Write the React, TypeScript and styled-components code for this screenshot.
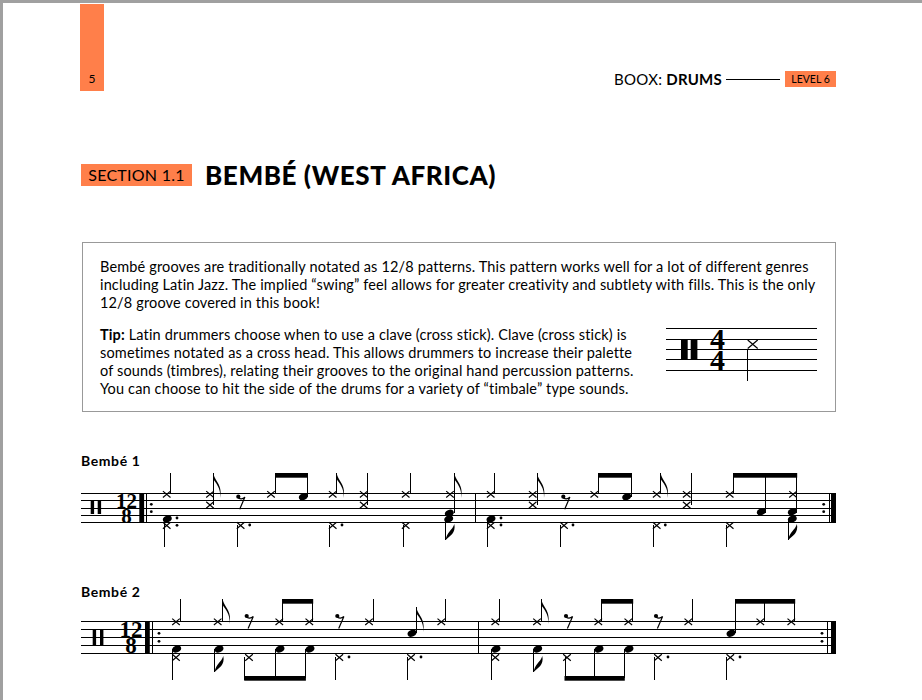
import React from 'react';
import styled, {createGlobalStyle} from 'styled-components';

const ORANGE = '#ff7f4a';

const GlobalStyle = createGlobalStyle`
  html, body {
    margin: 0;
    background: #fff;
  }
  body {
    font-family: Lato, "Open Sans", sans-serif;
    color: #000;
  }
`;

type Pt = [number, number];
type Stem = [number, number, number];
type Beam = [number, number, number];

interface ScoreData {
  top: number;
  height: number;
  staff: number[];
  clef: [number, number, number, number];
  meter: {x: number; size: number; upper: number; lower: number};
  repeatStart: [number, number];
  bar: number;
  repeatEnd: [number, number];
  crosses: Pt[];
  heads: Pt[];
  stems: Stem[];
  beams: Beam[];
  flagsUp: Pt[];
  flagsDown: Pt[];
  rests: Pt[];
  dots: Pt[];
}

const atY = (y: number, xs: number[]): Pt[] => xs.map((x): Pt => [x, y]);
const stemsFrom = (y1: number, y2: number, xs: number[]): Stem[] =>
  xs.map((x): Stem => [x, y1, y2]);
// keeps hairlines on a whole pixel so they stay black
const crisp = (v: number) => Math.floor(v) + 0.5;

const bembe1: ScoreData = {
  top: 468,
  height: 84,
  staff: [493.5, 500.5, 508.5, 515.5, 522.5],
  clef: [90.7, 97.7, 501, 13],
  meter: {x: 126.5, size: 21, upper: 508, lower: 523},
  repeatStart: [139.3, 146.3],
  bar: 475.3,
  repeatEnd: [829, 831],
  crosses: [
    ...atY(494.3, [166.7, 210, 271, 332.7, 363.7, 405.7, 450, 490.7, 532.7, 594.3, 656.7, 686.7, 729.7, 793]),
    ...atY(505, [210, 363.7, 532.7, 686.7]),
    ...atY(525.5, [166.7, 240.6, 332.7, 405.7, 490.7, 564, 656.7, 729.7]),
  ],
  heads: [
    [167.3, 519], [303.3, 496.7], [449.3, 513.3], [448.7, 519], [491, 519],
    [626.7, 496.7], [761.3, 511.7], [792.3, 511.7], [792.3, 519],
  ],
  stems: [
    ...stemsFrom(473, 494, [170.3, 275.3, 336.7, 410.3, 494.3, 598.3, 660.7, 733.3]),
    ...stemsFrom(473, 505, [213.3, 367.7, 537, 691.3]),
    ...stemsFrom(473, 497, [307.3, 631]),
    ...stemsFrom(473, 513, [454.3, 765.3, 796.7]),
    ...stemsFrom(519, 547, [164.3, 487.3]),
    ...stemsFrom(525, 547, [237.3, 329.3, 403.3, 560.3, 653.3, 726.3]),
    ...stemsFrom(519, 540, [445.7, 788.3]),
  ],
  beams: [[275, 307.8, 473], [598, 631.5, 473], [733, 797.2, 473]],
  flagsUp: atY(473, [213.3, 336.7, 454.3, 537, 660.7]),
  flagsDown: atY(540, [445.7, 788.3]),
  rests: atY(496.7, [238.3, 563.3]),
  dots: [
    [177, 518], [177, 525.3], [249.7, 525], [342, 525], [501, 518], [501, 525],
    [573, 525], [665.3, 525], [151.3, 504.3], [151.3, 511.7], [823.7, 504.3], [823.7, 511.7],
  ],
};

const bembe2: ScoreData = {
  top: 599,
  height: 89,
  staff: [621.5, 629.5, 637.5, 645.5, 653.5],
  clef: [92.7, 100, 630, 15],
  meter: {x: 131, size: 23, upper: 637, lower: 653},
  repeatStart: [145, 152.7],
  bar: 478.7,
  repeatEnd: [827.7, 831],
  crosses: [
    ...atY(621.8, [176, 217.7, 279.3, 309.3, 369, 441.3, 495.3, 537, 598.3, 628.3, 688.3, 760.3, 791.3]),
    ...atY(657.5, [176, 249, 339.3, 411, 495.3, 567, 658, 730.3]),
  ],
  heads: [
    [176.7, 649], [219, 649], [280, 649], [310, 649], [412, 633.3], [496, 649],
    [537.7, 649], [599, 649], [629, 649], [731, 633.3],
  ],
  stems: [
    ...stemsFrom(599, 621, [180.3, 222.7, 282.7, 312.7, 373.3, 445.7, 499.3, 541.3, 601.3, 632.7, 692.3, 764.3, 794.7]),
    ...stemsFrom(607, 633, [416.3]),
    ...stemsFrom(599, 633, [735.3]),
    ...stemsFrom(649, 680, [172.3, 491.3]),
    ...stemsFrom(649, 672, [214.7, 533.7]),
    ...stemsFrom(649, 678, [275.3, 305.4, 594.3, 624.3]),
    ...stemsFrom(657, 680, [244.7, 335.3, 407.3, 565, 654.3, 726.3]),
  ],
  beams: [
    [282.4, 313.2, 599], [601, 633.2, 599], [735, 795.2, 599],
    [244.2, 305.9, 676], [564.5, 624.8, 676],
  ],
  flagsUp: [[222.7, 599], [416.3, 607], [541.3, 599]],
  flagsDown: atY(672, [214.7, 533.7]),
  rests: atY(616, [246.7, 337.3, 566, 656]),
  dots: [
    [349, 657], [421, 657], [668, 657], [740, 657], [159, 633.3], [159, 641.3],
    [822, 633.3], [822, 641.3],
  ],
};

function Cross({x, y, r = 3.8}: {x: number; y: number; r?: number}) {
  return (
    <path
      d={`M${x - r} ${y - r * 0.85}L${x + r} ${y + r * 0.85}M${x + r} ${y - r * 0.85}L${x - r} ${y + r * 0.85}`}
      stroke="#000"
      strokeWidth="1.15"
      fill="none"
    />
  );
}

function Rest({x, y}: {x: number; y: number}) {
  return (
    <g>
      <circle cx={x} cy={y} r="2.1" />
      <path
        d={`M${x} ${y + 1.2}C${x + 2.5} ${y + 2.6} ${x + 5} ${y + 2} ${x + 6.6} ${y + 0.4}L${x + 1.4} ${y + 12.6}`}
        stroke="#000"
        strokeWidth="1.2"
        fill="none"
      />
    </g>
  );
}

function Score({data}: {data: ScoreData}) {
  const first = data.staff[0];
  const last = data.staff[4];
  const span = last - first;
  const [clefA, clefB, clefY, clefH] = data.clef;
  return (
    <ScoreSvg
      width="755"
      height={data.height}
      viewBox={`81 ${data.top} 755 ${data.height}`}
    >
      {data.staff.map(y => (
        <line key={y} x1="81" x2="836" y1={y} y2={y} stroke="#000" strokeWidth="1.1" />
      ))}
      <rect x={clefA} y={clefY} width="3.4" height={clefH} />
      <rect x={clefB} y={clefY} width="3.4" height={clefH} />
      <MeterText $size={data.meter.size}>
        <tspan x={data.meter.x} y={data.meter.upper}>12</tspan>
        <tspan x={data.meter.x} y={data.meter.lower}>8</tspan>
      </MeterText>
      <rect x={data.repeatStart[0]} y={first - 0.5} width="4.8" height={span + 1} />
      <line x1={crisp(data.repeatStart[1])} x2={crisp(data.repeatStart[1])} y1={first} y2={last} stroke="#000" />
      <line x1={crisp(data.bar)} x2={crisp(data.bar)} y1={first} y2={last} stroke="#000" />
      <line x1={crisp(data.repeatEnd[0])} x2={crisp(data.repeatEnd[0])} y1={first} y2={last} stroke="#000" />
      <rect x={data.repeatEnd[1]} y={first - 0.5} width="5" height={span + 1} />
      {data.stems.map(([x, y1, y2], i) => (
        <line key={i} x1={crisp(x)} x2={crisp(x)} y1={y1} y2={y2} stroke="#000" strokeWidth="1" />
      ))}
      {data.beams.map(([x1, x2, y], i) => (
        <rect key={i} x={x1} y={y} width={x2 - x1} height="4.7" />
      ))}
      {data.flagsUp.map(([x, y], i) => (
        <path
          key={i}
          d={`M${x} ${y}C${x + 1} ${y + 8} ${x + 9.5} ${y + 11} ${x + 7} ${y + 25}C${x + 7.6} ${y + 14} ${x + 2} ${y + 10} ${x} ${y + 6}Z`}
        />
      ))}
      {data.flagsDown.map(([x, y], i) => (
        <path
          key={i}
          d={`M${x} ${y}C${x + 1} ${y - 8} ${x + 7} ${y - 10} ${x + 8.6} ${y - 16}C${x + 10.5} ${y - 7} ${x + 4} ${y - 4} ${x} ${y}Z`}
        />
      ))}
      {data.crosses.map(([x, y], i) => (
        <Cross key={i} x={x} y={y} />
      ))}
      {data.heads.map(([x, y], i) => (
        <ellipse key={i} cx={x} cy={y} rx="4.6" ry="3.3" transform={`rotate(-25 ${x} ${y})`} />
      ))}
      {data.rests.map(([x, y], i) => (
        <Rest key={i} x={x} y={y} />
      ))}
      {data.dots.map(([x, y], i) => (
        <circle key={i} cx={x} cy={y} r="1.4" />
      ))}
    </ScoreSvg>
  );
}

function CrossStickKey() {
  const lines = [11.5, 22.5, 32.5, 42.5, 53.5];
  return (
    <KeySvg width="156" height="70" viewBox="0 0 156 70">
      {lines.map(y => (
        <line key={y} x1="3" x2="154" y1={y} y2={y} stroke="#000" strokeWidth="1.1" />
      ))}
      <rect x="18" y="22" width="6.7" height="20" />
      <rect x="27.7" y="22" width="6.7" height="20" />
      <MeterText $size={30}>
        <tspan x="54.5" y="32">4</tspan>
        <tspan x="54.5" y="53">4</tspan>
      </MeterText>
      <Cross x={89.7} y={27.3} r={5} />
      <line x1="84.5" x2="84.5" y1="32" y2="64" stroke="#000" />
    </KeySvg>
  );
}

export default function App(): JSX.Element {
  return (
    <>
      <GlobalStyle />
      <Frame>
        <Header>
          <PageTab>5</PageTab>
          <RunningHead>
            <BookName>
              BOOX: <strong>DRUMS</strong>
            </BookName>
            <HeadRule />
            <LevelTag>LEVEL 6</LevelTag>
          </RunningHead>
        </Header>
        <SectionRow>
          <SectionTag>SECTION 1.1</SectionTag>
          <SectionTitle>BEMBÉ (WEST AFRICA)</SectionTitle>
        </SectionRow>
        <InfoBox>
          <Paragraph>
            Bembé grooves are traditionally notated as 12/8 patterns. This pattern works well for a lot of different genres
            <br />
            including Latin Jazz. The implied “swing” feel allows for greater creativity and subtlety with fills. This is the only
            <br />
            12/8 groove covered in this book!
          </Paragraph>
          <TipRow>
            <Paragraph>
              <strong>Tip:</strong> Latin drummers choose when to use a clave (cross stick). Clave (cross stick) is
              <br />
              sometimes notated as a cross head. This allows drummers to increase their palette
              <br />
              of sounds (timbres), relating their grooves to the original hand percussion patterns.
              <br />
              You can choose to hit the side of the drums for a variety of “timbale” type sounds.
            </Paragraph>
            <CrossStickKey />
          </TipRow>
        </InfoBox>
        <Groove>
          <GrooveLabel>Bembé 1</GrooveLabel>
          <Score data={bembe1} />
        </Groove>
        <Groove $gap={32}>
          <GrooveLabel>Bembé 2</GrooveLabel>
          <Score data={bembe2} />
        </Groove>
      </Frame>
    </>
  );
}

const Frame = styled.div`
  box-sizing: border-box;
  width: 922px;
  height: 700px;
  overflow: hidden;
  background: #fff;
  border-top: 3px solid #a0a0a0;
  border-left: 3px solid #a0a0a0;
  padding-top: 1px;
`;

const Header = styled.header`
  display: flex;
  justify-content: space-between;
  align-items: flex-end;
  padding: 0 86px 0 77px;
`;

const PageTab = styled.div`
  box-sizing: border-box;
  width: 24px;
  height: 87px;
  padding-bottom: 5px;
  display: flex;
  align-items: flex-end;
  justify-content: center;
  background: ${ORANGE};
  font-size: 12px;
  line-height: 14px;
`;

const RunningHead = styled.div`
  display: flex;
  align-items: center;
  margin-bottom: 4px;
`;

const BookName = styled.div`
  font-size: 15px;
  line-height: 16px;
  letter-spacing: 0.25px;
  white-space: nowrap;

  strong {
    font-weight: 700;
  }
`;

const HeadRule = styled.div`
  width: 54px;
  height: 1px;
  margin: 0 5px 0 4px;
  background: #000;
`;

const LevelTag = styled.div`
  width: 51px;
  height: 16px;
  background: ${ORANGE};
  font-size: 10.5px;
  line-height: 16px;
  text-align: center;
  white-space: nowrap;
`;

const SectionRow = styled.div`
  display: flex;
  align-items: center;
  gap: 13px;
  margin: 73px 0 0 78px;
`;

const SectionTag = styled.div`
  width: 111px;
  height: 22px;
  background: ${ORANGE};
  font-size: 16px;
  line-height: 22px;
  letter-spacing: 0.25px;
  text-align: center;
  white-space: nowrap;
`;

const SectionTitle = styled.h1`
  margin: 0;
  font-size: 26px;
  line-height: 22px;
  font-weight: 900;
  letter-spacing: 0.6px;
  white-space: nowrap;
`;

const InfoBox = styled.section`
  box-sizing: border-box;
  width: 754px;
  height: 170px;
  margin: 56px 0 0 79px;
  padding: 15px 18px 0 17px;
  border: 1px solid #999;
`;

const Paragraph = styled.p`
  margin: 0;
  font-size: 14.5px;
  line-height: 18.2px;
  letter-spacing: 0.15px;
  white-space: nowrap;

  strong {
    font-weight: 700;
  }
`;

const TipRow = styled.div`
  display: flex;
  justify-content: space-between;
  align-items: flex-start;
  margin-top: 13px;
`;

const KeySvg = styled.svg`
  display: block;
  flex: none;
  margin: -9px -2px 0 -20px;
`;

const Groove = styled.div<{$gap?: number}>`
  margin: ${p => p.$gap ?? 41}px 0 0 78px;
`;

const GrooveLabel = styled.div`
  height: 15px;
  font-size: 14px;
  line-height: 15px;
  font-weight: 700;
  letter-spacing: 0.6px;
`;

const ScoreSvg = styled.svg`
  display: block;
`;

const MeterText = styled.text<{$size: number}>`
  font-family: "Liberation Serif", serif;
  font-weight: 700;
  font-size: ${p => p.$size}px;
  text-anchor: middle;
`;
